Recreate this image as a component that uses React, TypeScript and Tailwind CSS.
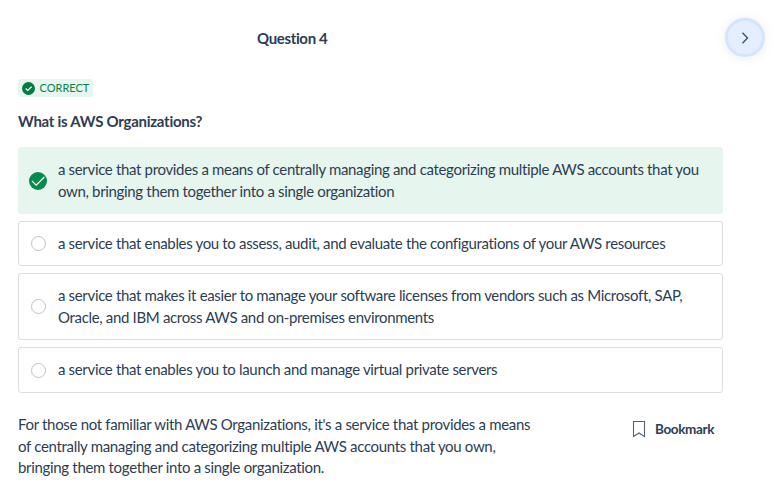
import React from "react";

const options = [
  { height: "h-[67px]", pad: "pb-[2px]", lines: ["a service that provides a means of centrally managing and categorizing multiple AWS accounts that you", "own, bringing them together into a single organization"], correct: true },
  { height: "h-[45px]", pad: "pb-px", lines: ["a service that enables you to assess, audit, and evaluate the configurations of your AWS resources"] },
  { height: "h-[67px]", pad: "pb-px", lines: ["a service that makes it easier to manage your software licenses from vendors such as Microsoft, SAP,", "Oracle, and IBM across AWS and on-premises environments"] },
  { height: "h-[46px]", pad: "pb-[2px]", lines: ["a service that enables you to launch and manage virtual private servers"] },
];

function SmallCheck() {
  return (
    <svg viewBox="0 0 13 13" className="size-[13px] shrink-0" fill="none">
      <circle cx="6.5" cy="6.5" r="6.5" fill="#057a45" />
      <path d="m3.7 6.5 2 2 3.9-3.8" stroke="white" strokeWidth="1.2" />
    </svg>
  );
}

function LargeCheck() {
  return (
    <svg viewBox="0 0 18 18" className="size-[18px] shrink-0" fill="none">
      <circle cx="9" cy="9" r="9" fill="#088a4b" />
      <path d="m3 9 4.2 4.2L15.3 5" stroke="white" strokeWidth="1.2" />
    </svg>
  );
}

export default function App() {
  return (
    <main className="h-[488px] w-[779px] overflow-hidden bg-white pl-[18px] font-['Lato',sans-serif] text-[15px] leading-[22px] tracking-[-0.335px] text-[#2d3d54]">
      <header className="flex h-[79px] items-start justify-between pr-[14px] pt-[17px]">
        <h1 className="ml-[239px] mt-[10px] font-bold tracking-[-0.35px]">Question 4</h1>
        <button className="mt-px flex h-[39px] w-10 items-center justify-center rounded-full border-[3px] border-[#d5e4fd] bg-[#e5eefe] shadow-[0_1px_12px_rgba(0,0,0,0.08)]">
          <svg viewBox="0 0 16 16" className="size-4" fill="none"><path d="m5.5 2.8 5 5.2-5 5.2" stroke="#3d4c61" strokeWidth="1.3" /></svg>
        </button>
      </header>
      <div className="flex h-[18px] w-[75px] items-center gap-[4.5px] rounded-[3px] bg-[#e6f5ee] pl-1 text-[11px] tracking-normal text-[#08824a]">
        <SmallCheck />CORRECT
      </div>
      <h2 className="mt-[13px] font-bold tracking-[-0.26px]">What is AWS Organizations?</h2>
      <div className="mt-[15px] flex w-[705px] flex-col gap-[7px]">
        {options.map((option) => (
          <label key={option.lines[0]} className={`flex items-center rounded-[3px] border pl-[10px] ${option.height} ${option.correct ? "border-[#e6f5ee] bg-[#e6f5ee]" : "border-[#dadde2] bg-white"}`}>
            {option.correct ? <LargeCheck /> : <span className="ml-[2px] size-[15px] shrink-0 rounded-full border border-[#bdc2ca]" />}
            <span className={`${option.correct ? "ml-[11px]" : "ml-3"} ${option.pad}`}>{option.lines.map((line) => <span key={line} className="block whitespace-nowrap">{line}</span>)}</span>
          </label>
        ))}
      </div>
      <section className="mt-[21px] flex">
        <p className="w-[614px] leading-[21.7px] tracking-[-0.32px]">For those not familiar with AWS Organizations, it's a service that provides a means<br />of centrally managing and categorizing multiple AWS accounts that you own,<br />bringing them together into a single organization.</p>
        <button className="mt-1 flex h-[22px] items-center gap-[9px] text-[13.5px] font-bold tracking-[-0.35px]">
          <svg viewBox="0 0 14 18" className="h-[18px] w-[14px]" fill="none"><path d="M1.5 1.5h11v15L7 13l-5.5 3.5z" stroke="#536276" strokeWidth="1.1" /></svg>
          Bookmark
        </button>
      </section>
    </main>
  );
}
